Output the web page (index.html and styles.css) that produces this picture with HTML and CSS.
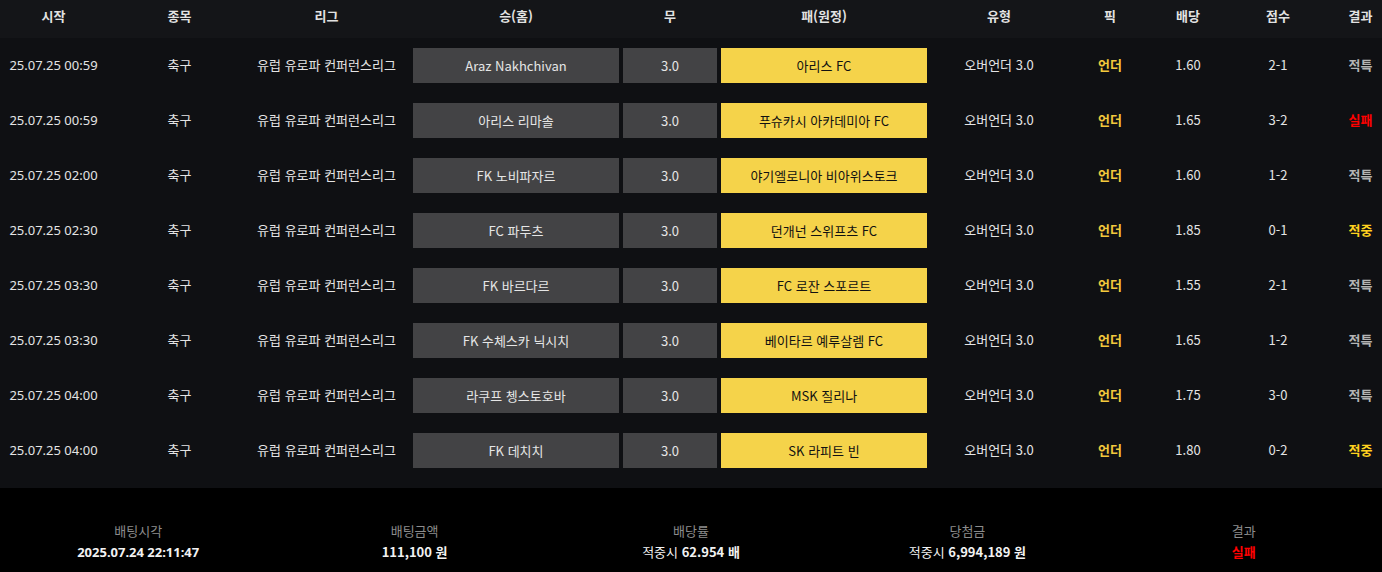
FILE: index.html
```html
<!DOCTYPE html>
<html lang="ko">
<head>
<meta charset="utf-8">
<title>배팅내역</title>
<link rel="stylesheet" href="styles.css">
</head>
<body>
<div class="board">
  <div class="row head">
    <div class="c">시작</div>
    <div class="c">종목</div>
    <div class="c league">리그</div>
    <div class="c">승(홈)</div>
    <div class="c">무</div>
    <div class="c">패(원정)</div>
    <div class="c">유형</div>
    <div class="c">픽</div>
    <div class="c">배당</div>
    <div class="c">점수</div>
    <div class="c last">결과</div>
  </div>

  <div class="row">
    <div class="c time">25.07.25 00:59</div>
    <div class="c">축구</div>
    <div class="c league">유럽 유로파 컨퍼런스리그</div>
    <div class="cell"><div class="box home">Araz Nakhchivan</div></div>
    <div class="cell"><div class="box draw">3.0</div></div>
    <div class="cell"><div class="box away">아리스 FC</div></div>
    <div class="c">오버언더 3.0</div>
    <div class="c pick">언더</div>
    <div class="c">1.60</div>
    <div class="c">2-1</div>
    <div class="c last res void">적특</div>
  </div>

  <div class="row">
    <div class="c time">25.07.25 00:59</div>
    <div class="c">축구</div>
    <div class="c league">유럽 유로파 컨퍼런스리그</div>
    <div class="cell"><div class="box home">아리스 리마솔</div></div>
    <div class="cell"><div class="box draw">3.0</div></div>
    <div class="cell"><div class="box away">푸슈카시 아카데미아 FC</div></div>
    <div class="c">오버언더 3.0</div>
    <div class="c pick">언더</div>
    <div class="c">1.65</div>
    <div class="c">3-2</div>
    <div class="c last res lose">실패</div>
  </div>

  <div class="row">
    <div class="c time">25.07.25 02:00</div>
    <div class="c">축구</div>
    <div class="c league">유럽 유로파 컨퍼런스리그</div>
    <div class="cell"><div class="box home">FK 노비파자르</div></div>
    <div class="cell"><div class="box draw">3.0</div></div>
    <div class="cell"><div class="box away">야기엘로니아 비아위스토크</div></div>
    <div class="c">오버언더 3.0</div>
    <div class="c pick">언더</div>
    <div class="c">1.60</div>
    <div class="c">1-2</div>
    <div class="c last res void">적특</div>
  </div>

  <div class="row">
    <div class="c time">25.07.25 02:30</div>
    <div class="c">축구</div>
    <div class="c league">유럽 유로파 컨퍼런스리그</div>
    <div class="cell"><div class="box home">FC 파두츠</div></div>
    <div class="cell"><div class="box draw">3.0</div></div>
    <div class="cell"><div class="box away">던개넌 스위프츠 FC</div></div>
    <div class="c">오버언더 3.0</div>
    <div class="c pick">언더</div>
    <div class="c">1.85</div>
    <div class="c">0-1</div>
    <div class="c last res win">적중</div>
  </div>

  <div class="row">
    <div class="c time">25.07.25 03:30</div>
    <div class="c">축구</div>
    <div class="c league">유럽 유로파 컨퍼런스리그</div>
    <div class="cell"><div class="box home">FK 바르다르</div></div>
    <div class="cell"><div class="box draw">3.0</div></div>
    <div class="cell"><div class="box away">FC 로잔 스포르트</div></div>
    <div class="c">오버언더 3.0</div>
    <div class="c pick">언더</div>
    <div class="c">1.55</div>
    <div class="c">2-1</div>
    <div class="c last res void">적특</div>
  </div>

  <div class="row">
    <div class="c time">25.07.25 03:30</div>
    <div class="c">축구</div>
    <div class="c league">유럽 유로파 컨퍼런스리그</div>
    <div class="cell"><div class="box home">FK 수체스카 닉시치</div></div>
    <div class="cell"><div class="box draw">3.0</div></div>
    <div class="cell"><div class="box away">베이타르 예루살렘 FC</div></div>
    <div class="c">오버언더 3.0</div>
    <div class="c pick">언더</div>
    <div class="c">1.65</div>
    <div class="c">1-2</div>
    <div class="c last res void">적특</div>
  </div>

  <div class="row">
    <div class="c time">25.07.25 04:00</div>
    <div class="c">축구</div>
    <div class="c league">유럽 유로파 컨퍼런스리그</div>
    <div class="cell"><div class="box home">라쿠프 쳉스토호바</div></div>
    <div class="cell"><div class="box draw">3.0</div></div>
    <div class="cell"><div class="box away">MSK 질리나</div></div>
    <div class="c">오버언더 3.0</div>
    <div class="c pick">언더</div>
    <div class="c">1.75</div>
    <div class="c">3-0</div>
    <div class="c last res void">적특</div>
  </div>

  <div class="row">
    <div class="c time">25.07.25 04:00</div>
    <div class="c">축구</div>
    <div class="c league">유럽 유로파 컨퍼런스리그</div>
    <div class="cell"><div class="box home">FK 데치치</div></div>
    <div class="cell"><div class="box draw">3.0</div></div>
    <div class="cell"><div class="box away">SK 라피트 빈</div></div>
    <div class="c">오버언더 3.0</div>
    <div class="c pick">언더</div>
    <div class="c">1.80</div>
    <div class="c">0-2</div>
    <div class="c last res win">적중</div>
  </div>
</div>

<div class="summary">
  <div class="sum-item">
    <div class="label">배팅시각</div>
    <div class="value time">2025.07.24 22:11:47</div>
  </div>
  <div class="sum-item">
    <div class="label">배팅금액</div>
    <div class="value">111,100 원</div>
  </div>
  <div class="sum-item">
    <div class="label">배당률</div>
    <div class="value"><span class="pre">적중시</span> 62.954 배</div>
  </div>
  <div class="sum-item">
    <div class="label">당첨금</div>
    <div class="value"><span class="pre">적중시</span> 6,994,189 원</div>
  </div>
  <div class="sum-item">
    <div class="label">결과</div>
    <div class="value lose">실패</div>
  </div>
</div>
</body>
</html>
```

FILE: styles.css
```css
html, body {
  margin: 0;
  padding: 0;
  background: #000;
}

body {
  width: 1382px;
  height: 572px;
  overflow: hidden;
  font-family: "Noto Sans CJK KR", "Noto Sans", "Liberation Sans", sans-serif;
  font-size: 13px;
  color: #e4e4e4;
}

.board {
  background: #0f1013;
  padding-bottom: 10px;
}

.row {
  display: grid;
  grid-template-columns: 107px 145px 159px 210px 98px 210px 140px 82px 74px 106px 51px;
  height: 55px;
  align-items: center;
}

.row.head {
  height: 38px;
  background: #141518;
  align-items: start;
  font-weight: 700;
  color: #e2e2e2;
}

.row.head .c {
  padding-top: 6px;
  padding-bottom: 0;
  line-height: 20px;
}

.c {
  text-align: center;
  line-height: 20px;
  padding-bottom: 2px;
  white-space: nowrap;
}

.time {
  font-family: "Noto Sans", "Noto Sans CJK KR", sans-serif;
}

.league {
  padding-right: 10px;
}

.last {
  padding-left: 8px;
}

.cell {
  padding: 0 2px;
}

.box {
  height: 35px;
  display: flex;
  align-items: center;
  justify-content: center;
  padding-bottom: 1px;
  box-sizing: border-box;
  white-space: nowrap;
}

.home,
.draw {
  background: #434345;
  color: #e6e6e6;
}

.away {
  background: #f5d34a;
  color: #111;
}

.pick {
  color: #f4c93c;
  font-weight: 700;
}

.res {
  font-weight: 700;
}

.void {
  color: #b4b4b4;
}

.lose {
  color: #ff0000;
}

.win {
  color: #ffd21f;
}

.summary {
  display: grid;
  grid-template-columns: repeat(5, 1fr);
  height: 84px;
  box-sizing: border-box;
  padding-top: 33px;
  background: #000;
}

.sum-item {
  text-align: center;
}

.label {
  color: #8c8c8c;
  line-height: 20px;
}

.value {
  margin-top: 1px;
  line-height: 20px;
  font-weight: 700;
  color: #f2f2f2;
}

.value .pre {
  font-weight: 400;
}

.value.lose {
  color: #ff0000;
}
```
